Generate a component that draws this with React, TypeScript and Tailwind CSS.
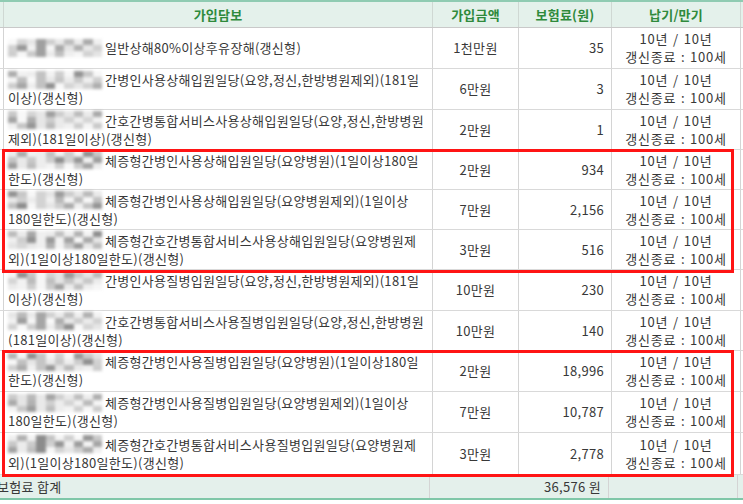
import React from "react";

type Row = {
  lines: string[];
  amount: string;
  premium: string;
  h: string;
};

const rows: Row[] = [
  { lines: ["일반상해80%이상후유장해(갱신형)"], amount: "1천만원", premium: "35", h: "h-[41px]" },
  { lines: ["간병인사용상해입원일당(요양,정신,한방병원제외)(181일", "이상)(갱신형)"], amount: "6만원", premium: "3", h: "h-[41px]" },
  { lines: ["간호간병통합서비스사용상해입원일당(요양,정신,한방병원", "제외)(181일이상)(갱신형)"], amount: "2만원", premium: "1", h: "h-[40px]" },
  { lines: ["체증형간병인사용상해입원일당(요양병원)(1일이상180일", "한도)(갱신형)"], amount: "2만원", premium: "934", h: "h-[40px]" },
  { lines: ["체증형간병인사용상해입원일당(요양병원제외)(1일이상", "180일한도)(갱신형)"], amount: "7만원", premium: "2,156", h: "h-[40px]" },
  { lines: ["체증형간호간병통합서비스사용상해입원일당(요양병원제", "외)(1일이상180일한도)(갱신형)"], amount: "3만원", premium: "516", h: "h-[40px]" },
  { lines: ["간병인사용질병입원일당(요양,정신,한방병원제외)(181일", "이상)(갱신형)"], amount: "10만원", premium: "230", h: "h-[41px]" },
  { lines: ["간호간병통합서비스사용질병입원일당(요양,정신,한방병원", "(181일이상)(갱신형)"], amount: "10만원", premium: "140", h: "h-[40px]" },
  { lines: ["체증형간병인사용질병입원일당(요양병원)(1일이상180일", "한도)(갱신형)"], amount: "2만원", premium: "18,996", h: "h-[41px]" },
  { lines: ["체증형간병인사용질병입원일당(요양병원제외)(1일이상", "180일한도)(갱신형)"], amount: "7만원", premium: "10,787", h: "h-[41px]" },
  { lines: ["체증형간호간병통합서비스사용질병입원일당(요양병원제", "외)(1일이상180일한도)(갱신형)"], amount: "3만원", premium: "2,778", h: "h-[42px]" },
];

// pixelated name block (blurred out in the original)
function Mosaic({ seed }: { seed: number }) {
  const cells = [];
  for (let r = 0; r < 3; r++) {
    for (let c = 0; c < 10; c++) {
      const v = (seed * 29 + c * 41 + r * 67 + c * r * 11) % 100;
      const g = v < 20 ? 140 + v * 2 : v < 55 ? 185 + (v % 30) : 228 + (v % 22);
      cells.push(
        <div
          key={`${r}-${c}`}
          className="w-[9.4px] h-[6px]"
          style={{ backgroundColor: `rgb(${g},${g},${g})` }}
        />
      );
    }
  }
  return (
    <span className="inline-grid grid-cols-10 w-[94px] h-[18px] align-middle mr-[3px] blur-[1.6px] -mt-[3px]">
      {cells}
    </span>
  );
}

function DataRow({ row, index }: { row: Row; index: number }) {
  return (
    <div className={`flex ${row.h} border-b border-[#d9d9d9]`}>
      <div className="w-[4px] shrink-0 border-r border-[#d4d4d4]" />
      <div className="w-[429px] shrink-0 border-r border-[#d4d4d4] flex flex-col justify-center pl-[4px] leading-[18px] tracking-[0.3px]">
        <div className="whitespace-nowrap">
          <Mosaic seed={index + 3} />
          {row.lines[0]}
        </div>
        {row.lines[1] && <div className="whitespace-nowrap">{row.lines[1]}</div>}
      </div>
      <div className="w-[86px] shrink-0 border-r border-[#d4d4d4] flex items-center justify-center tracking-[0.3px]">
        {row.amount}
      </div>
      <div className="w-[93px] shrink-0 border-r border-[#d4d4d4] flex items-center justify-end pr-[7px] tracking-[0.3px]">
        {row.premium}
      </div>
      <div className="w-[129px] shrink-0 border-r border-[#d4d4d4] flex flex-col items-center justify-center leading-[18px] tracking-[0.8px] [word-spacing:1px]">
        <div>10년 / 10년</div>
        <div>갱신종료 : 100세</div>
      </div>
      <div className="flex-1" />
    </div>
  );
}

export default function App() {
  const headCell = "shrink-0 border-r border-[#cfd8d3] flex items-center justify-center";
  return (
    <div
      className="w-[743px] h-[504px] bg-white text-[13px] text-[#383838] overflow-hidden"
      style={{ fontFamily: '"Noto Sans CJK KR", "Noto Sans", sans-serif' }}
    >
      {/* header */}
      <div className="flex h-[28px] bg-[#e4f1eb] border-t-2 border-t-[#8fcbb2] border-b border-b-[#c9c9c9] font-bold text-[#2f8a3c] tracking-[0.2px]">
        <div className="w-[4px] shrink-0 border-r border-[#cfd8d3]" />
        <div className={`w-[429px] ${headCell}`}>가입담보</div>
        <div className={`w-[86px] ${headCell}`}>가입금액</div>
        <div className={`w-[93px] ${headCell}`}>보험료(원)</div>
        <div className={`w-[129px] ${headCell}`}>납기/만기</div>
        <div className="flex-1" />
      </div>

      {rows.slice(0, 3).map((r, i) => (
        <DataRow key={i} row={r} index={i} />
      ))}

      <div className="relative">
        {rows.slice(3, 6).map((r, i) => (
          <DataRow key={i} row={r} index={i + 3} />
        ))}
        <div className="absolute left-[2px] -top-[1px] w-[732px] -bottom-[3px] border-[3px] border-[#ff1414] z-10" />
      </div>

      {rows.slice(6, 8).map((r, i) => (
        <DataRow key={i} row={r} index={i + 6} />
      ))}

      <div className="relative">
        {rows.slice(8).map((r, i) => (
          <DataRow key={i} row={r} index={i + 8} />
        ))}
        <div className="absolute left-[2px] -top-[1px] w-[732px] -bottom-[2px] border-[3px] border-[#ff1414] z-10" />
      </div>

      {/* total */}
      <div className="flex h-[25px] bg-[#e4f0eb] border-b-2 border-b-[#7fc7a8] tracking-[0.3px]">
        <div className="w-[433px] shrink-0 border-r border-[#d4d4d4] flex items-center -ml-[3px]">
          보험료 합계
        </div>
        <div className="w-[179px] shrink-0 border-r border-[#d4d4d4] flex items-center justify-end pr-[7px]">
          36,576 원
        </div>
        <div className="w-[129px] shrink-0 border-r border-[#d4d4d4]" />
        <div className="flex-1" />
      </div>
    </div>
  );
}
